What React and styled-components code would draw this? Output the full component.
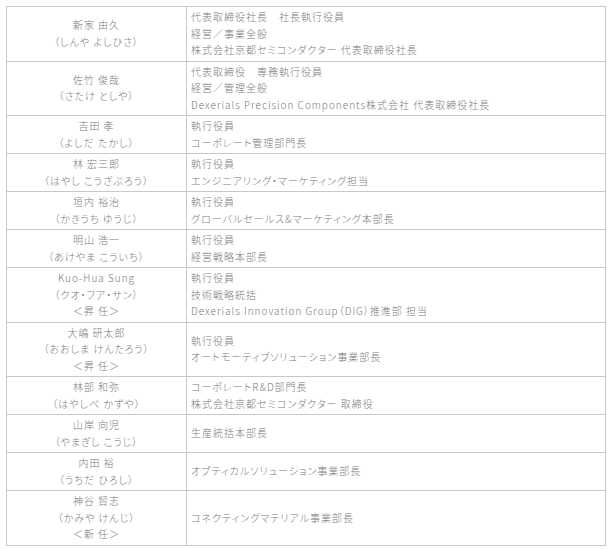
import React from "react";
import styled, { createGlobalStyle } from "styled-components";

const Global = createGlobalStyle`
  html, body { margin: 0; padding: 0; background: #fff; }
  body {
    font-family: "Noto Sans CJK JP", "Noto Sans", sans-serif;
  }
`;

const Page = styled.div`
  padding: 6px 7px 0 6px;
`;

const Table = styled.table`
  width: 600px;
  border-collapse: collapse;
  table-layout: fixed;
  border: 1px solid #c8c8c8;
  color: #7a7a7a;
  font-size: 10px;
  font-weight: 300;
  line-height: 16.5px;
  letter-spacing: 1px;
  font-feature-settings: "palt";
`;

const Row = styled.tr`
  border-top: 1px solid #c8c8c8;
`;

const NameCell = styled.td`
  width: 171px;
  padding: 2px 4px;
  border-right: 1px solid #c8c8c8;
  text-align: center;
  vertical-align: middle;
`;

const RoleCell = styled.td`
  padding: 2px 4px;
  text-align: left;
  vertical-align: middle;
`;

const Line = styled.div`
  white-space: nowrap;
`;

const data = [
  {
    name: ["新家 由久", "（しんや よしひさ）"],
    role: ["代表取締役社長　社長執行役員", "経営／事業全般", "株式会社京都セミコンダクター 代表取締役社長"],
  },
  {
    name: ["佐竹 俊哉", "（さたけ としや）"],
    role: ["代表取締役　専務執行役員", "経営／管理全般", "Dexerials Precision Components株式会社 代表取締役社長"],
  },
  { name: ["吉田 孝", "（よしだ たかし）"], role: ["執行役員", "コーポレート管理部門長"] },
  { name: ["林 宏三郎", "（はやし こうざぶろう）"], role: ["執行役員", "エンジニアリング・マーケティング担当"] },
  { name: ["垣内 裕治", "（かきうち ゆうじ）"], role: ["執行役員", "グローバルセールス&マーケティング本部長"] },
  { name: ["明山 浩一", "（あけやま こういち）"], role: ["執行役員", "経営戦略本部長"] },
  {
    name: ["Kuo-Hua Sung", "（クオ・フア・サン）", "＜昇 任＞"],
    role: ["執行役員", "技術戦略統括", "Dexerials Innovation Group（DIG）推進部 担当"],
  },
  {
    name: ["大嶋 研太郎", "（おおしま けんたろう）", "＜昇 任＞"],
    role: ["執行役員", "オートモーティブソリューション事業部長"],
  },
  { name: ["林部 和弥", "（はやしべ かずや）"], role: ["コーポレートR&D部門長", "株式会社京都セミコンダクター 取締役"] },
  { name: ["山岸 向児", "（やまぎし こうじ）"], role: ["生産統括本部長"] },
  { name: ["内田 裕", "（うちだ ひろし）"], role: ["オプティカルソリューション事業部長"] },
  { name: ["神谷 賢志", "（かみや けんじ）", "＜新 任＞"], role: ["コネクティングマテリアル事業部長"] },
];

export default function App() {
  return (
    <Page>
      <Global />
      <Table>
        <tbody>
          {data.map((r, i) => (
            <Row key={i}>
              <NameCell>
                {r.name.map((t, j) => (
                  <Line key={j}>{t}</Line>
                ))}
              </NameCell>
              <RoleCell>
                {r.role.map((t, j) => (
                  <Line key={j}>{t}</Line>
                ))}
              </RoleCell>
            </Row>
          ))}
        </tbody>
      </Table>
    </Page>
  );
}
